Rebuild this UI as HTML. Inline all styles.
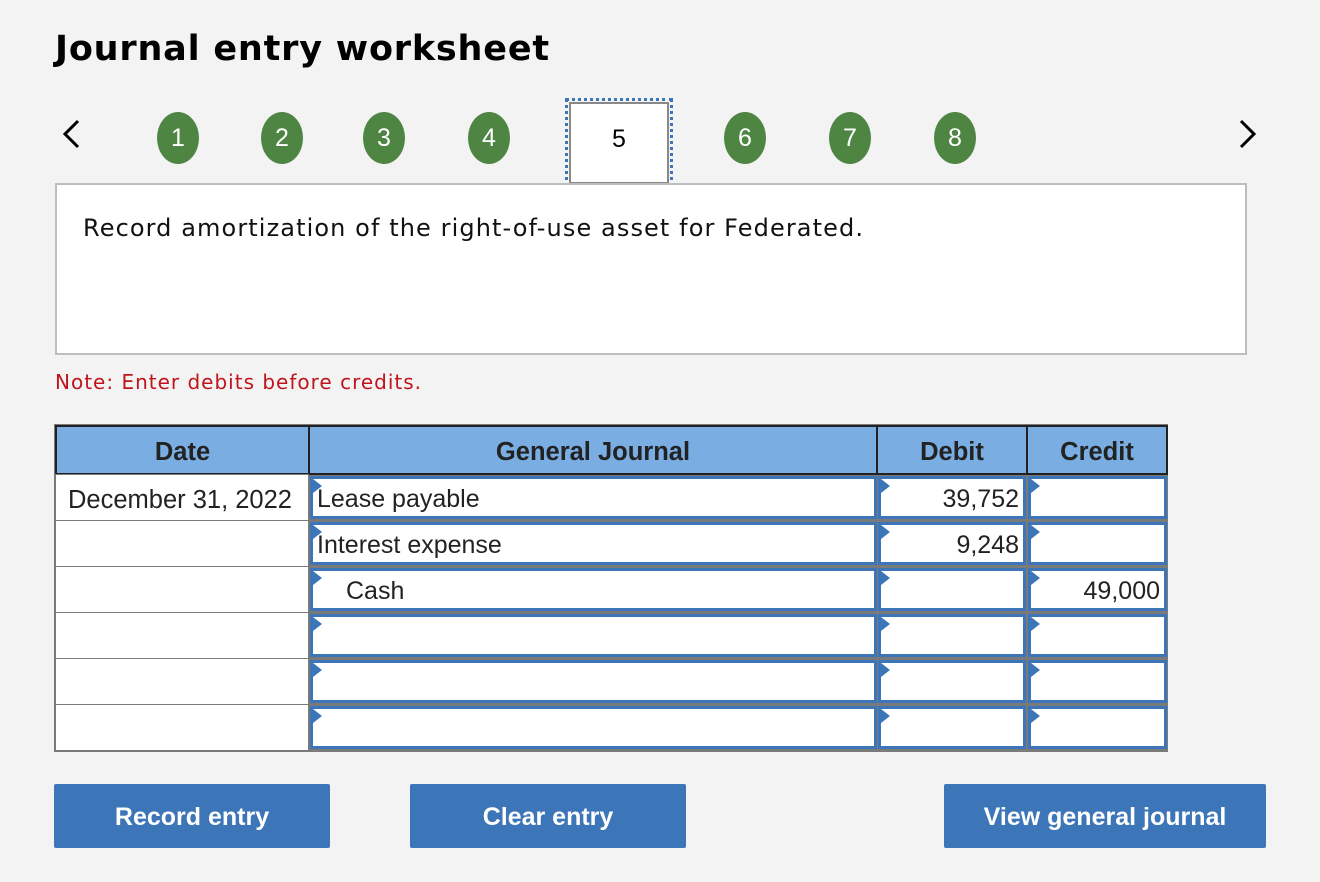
<!DOCTYPE html>
<html><head><style>
body{margin:0;width:1320px;height:882px;background:#f3f3f3;position:relative;overflow:hidden;font-family:"Liberation Sans",Arial,sans-serif;}
.a{position:absolute}
h1{position:absolute;left:55px;top:29px;margin:0;font:bold 35px "DejaVu Sans",Verdana,sans-serif;letter-spacing:0.8px;color:#000;}
.c{position:absolute;width:42px;height:52px;border-radius:50%;background:#4e8543;color:#fff;font-size:25px;text-align:center;line-height:52px;top:112px}
.cell{position:absolute;box-sizing:border-box;border:1px solid #7a7a7a;background:#fff}
.in{position:absolute;box-sizing:border-box;border:3px solid #3d76b8;background:#fff;font-size:25px;color:#222;line-height:40px;white-space:nowrap}
.tri{position:absolute;left:0;top:0;width:0;height:0;border-top:7px solid transparent;border-bottom:7px solid transparent;border-left:9px solid #3d76b8}
.btn{position:absolute;top:784px;height:64px;background:#3d76b8;color:#fff;font-weight:bold;font-size:25px;text-align:center;line-height:66px;border-radius:2px}
.hd{position:absolute;top:425px;height:50px;box-sizing:border-box;background:#7aade2;border:2px solid #222;font-weight:bold;font-size:25.5px;text-align:center;line-height:50px;color:#222}
</style></head><body>
<h1>Journal entry worksheet</h1>
<svg class="a" style="left:60px;top:118px" width="24" height="32"><polyline points="18,3 5,16 18,29" fill="none" stroke="#000" stroke-width="3"/></svg>
<svg class="a" style="left:1236px;top:118px" width="24" height="32"><polyline points="5,3 18,16 5,29" fill="none" stroke="#000" stroke-width="3"/></svg>
<div class="c" style="left:157px">1</div>
<div class="c" style="left:261px">2</div>
<div class="c" style="left:363px">3</div>
<div class="c" style="left:468px">4</div>
<div class="a" style="left:565px;top:98px;width:102px;height:84px;border:3px dotted #3d76b8"></div>
<div class="a" style="left:569px;top:102px;width:96px;height:78px;border:2px solid #888;background:#fff;font-size:25px;text-align:center;line-height:70px">5</div>
<div class="c" style="left:724px">6</div>
<div class="c" style="left:829px">7</div>
<div class="c" style="left:934px">8</div>
<div class="a" style="left:55px;top:183px;width:1188px;height:168px;border:2px solid #bdbdbd;background:#fff"></div>
<div class="a" style="left:83px;top:214px;font:24px 'DejaVu Sans',Verdana,sans-serif;letter-spacing:1.1px;color:#111">Record amortization of the right-of-use asset for Federated.</div>
<div class="a" style="left:55px;top:370px;font:20px 'DejaVu Sans',Verdana,sans-serif;letter-spacing:1px;color:#c0141c">Note: Enter debits before credits.</div>

<div class="a" style="left:54px;top:424px;width:1114px;height:328px;background:#7a7a7a"></div>
<div class="hd" style="left:55px;width:255px">Date</div>
<div class="hd" style="left:308px;width:570px">General Journal</div>
<div class="hd" style="left:876px;width:152px">Debit</div>
<div class="hd" style="left:1026px;width:142px">Credit</div>

<div id="rows"></div>
<script>
var d=[["December 31, 2022","Lease payable","39,752",""],["","Interest expense","9,248",""],["","   Cash","","49,000"],["","","",""],["","","",""],["","","",""]];
var h="";
for(var i=0;i<6;i++){var t=474+i*46;
h+='<div class="cell" style="left:55px;top:'+t+'px;width:254px;height:47px;font-size:25.5px;line-height:50px;padding-left:12px;color:#222">'+d[i][0]+'</div>';
h+='<div class="in" style="left:310px;top:'+(t+2)+'px;width:567px;height:43px;padding-left:'+(d[i][1].indexOf("   ")==0?33:4)+'px"><div class="tri"></div>'+d[i][1].trim()+'</div>';
h+='<div class="in" style="left:878px;top:'+(t+2)+'px;width:148px;height:43px;text-align:right;padding-right:4px"><div class="tri"></div>'+d[i][2]+'</div>';
h+='<div class="in" style="left:1028px;top:'+(t+2)+'px;width:139px;height:43px;text-align:right;padding-right:4px"><div class="tri"></div>'+d[i][3]+'</div>';}
document.getElementById("rows").innerHTML=h;
</script>
<div class="btn" style="left:54px;width:276px">Record entry</div>
<div class="btn" style="left:410px;width:276px">Clear entry</div>
<div class="btn" style="left:944px;width:322px">View general journal</div>
</body></html>
